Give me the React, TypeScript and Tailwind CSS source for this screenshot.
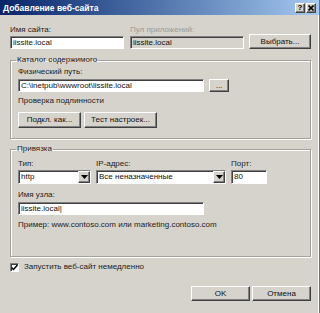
import { ReactNode } from 'react';

const sunken =
  'border border-t-[#808080] border-l-[#808080] border-b-white border-r-white shadow-[inset_1px_1px_0_#404040]';
const raised =
  'border border-t-white border-l-white border-b-[#404040] border-r-[#404040] shadow-[inset_-1px_-1px_0_#808080] bg-[#d6d3cc]';

function Label({ children, muted = false }: { children: ReactNode; muted?: boolean }) {
  return (
    <div className={`leading-[10px] whitespace-nowrap ${muted ? 'text-[#9c9a94]' : 'text-[#222]'}`}>
      {children}
    </div>
  );
}

function TextBox({ value, className = '', disabled = false }: { value: string; className?: string; disabled?: boolean }) {
  return (
    <div
      className={`${sunken} ${disabled ? 'bg-[#d6d3cc]' : 'bg-white'} h-[13px] flex items-center pl-[2px] leading-[10px] text-[#111] ${className}`}
    >
      {value}
    </div>
  );
}

function Button({ children, className = '' }: { children: ReactNode; className?: string }) {
  return (
    <div className={`${raised} flex items-center justify-center leading-[10px] text-[#111] ${className}`}>
      {children}
    </div>
  );
}

function Select({ value, className = '' }: { value: string; className?: string }) {
  return (
    <div className={`${sunken} bg-white h-[14px] flex items-stretch ${className}`}>
      <div className="flex-1 flex items-center pl-[2px] leading-[10px] text-[#111] whitespace-nowrap overflow-hidden">
        {value}
      </div>
      <div className={`${raised} w-[12px] flex items-center justify-center`}>
        <svg width="7" height="4" viewBox="0 0 7 4">
          <path d="M0 0h7L3.5 4z" fill="#000" />
        </svg>
      </div>
    </div>
  );
}

function Group({ title, children, className = '' }: { title: string; children: ReactNode; className?: string }) {
  return (
    <fieldset
      className={`border border-[#a4a19a] shadow-[inset_1px_1px_0_#fff,1px_1px_0_#fff] px-[7px] ${className}`}
    >
      <legend className="-ml-[2px] px-[1px] leading-[10px] text-[#222]">{title}</legend>
      {children}
    </fieldset>
  );
}

export default function App() {
  return (
    <div className="w-[320px] h-[313px] bg-[#d6d3cc] font-['Liberation_Sans',Arial,sans-serif] text-[8px] flex flex-col border-r border-r-[#707070] shadow-[inset_-1px_0_0_#fff] overflow-hidden">
      {/* Title bar */}
      <div className="h-[15px] bg-gradient-to-r from-[#0a246a] to-[#a6caf0] flex items-center pl-[3px] pr-[3px]">
        <span className="text-white font-bold text-[8.5px] leading-[10px] flex-1">Добавление веб-сайта</span>
        <div className={`${raised} w-[10px] h-[10px] flex items-center justify-center text-[8px] font-bold leading-none text-black`}>?</div>
        <div className={`${raised} w-[10px] h-[10px] ml-[1px] flex items-center justify-center`}>
          <svg width="6" height="6" viewBox="0 0 6 6">
            <path d="M0.5 0.5L5.5 5.5M5.5 0.5L0.5 5.5" stroke="#000" strokeWidth="1.6" />
          </svg>
        </div>
      </div>

      <div className="flex flex-col pl-[10px] pr-[8px]">
        {/* Site name row */}
        <div className="flex items-end pt-[10px]">
          <div className="w-[114px] flex flex-col gap-[1px]">
            <Label>Имя сайта:</Label>
            <TextBox value="iissite.local" />
          </div>
          <div className="w-[114px] ml-[6px] flex flex-col gap-[1px]">
            <Label muted>Пул приложений:</Label>
            <TextBox value="iissite.local" disabled />
          </div>
          <Button className="w-[62px] h-[15px] ml-[5px]">Выбрать...</Button>
        </div>

        {/* Content directory */}
        <Group title="Каталог содержимого" className="mt-[6px] pb-[10px]">
          <div className="mt-[2px]">
            <Label>Физический путь:</Label>
          </div>
          <div className="flex items-center mt-[2px]">
            <TextBox value="C:\inetpub\wwwroot\iissite.local" className="w-[186px]" />
            <Button className="w-[20px] h-[13px] ml-[5px]">...</Button>
          </div>
          <div className="mt-[4px]">
            <Label>Проверка подлинности</Label>
          </div>
          <div className="flex gap-[3px] mt-[6px]">
            <Button className="w-[63px] h-[16px]">Подкл. как...</Button>
            <Button className="w-[73px] h-[16px]">Тест настроек...</Button>
          </div>
        </Group>

        {/* Binding */}
        <Group title="Привязка" className="mt-[5px] pb-[26px]">
          <div className="flex gap-[5px] mt-[5px]">
            <div className="w-[73px] flex flex-col gap-[1px]">
              <Label>Тип:</Label>
              <Select value="http" />
            </div>
            <div className="w-[130px] flex flex-col gap-[1px]">
              <Label>IP-адрес:</Label>
              <Select value="Все неназначенные" />
            </div>
            <div className="w-[36px] flex flex-col gap-[1px]">
              <Label>Порт:</Label>
              <TextBox value="80" className="h-[14px]" />
            </div>
          </div>
          <div className="mt-[6px]">
            <Label>Имя узла:</Label>
          </div>
          <TextBox value="iissite.local|" className="w-[186px] mt-[2px]" />
          <div className="mt-[5px]">
            <Label>Пример: www.contoso.com или marketing.contoso.com</Label>
          </div>
        </Group>

        {/* Start checkbox */}
        <div className="flex items-center mt-[5px]">
          <div className={`${sunken} bg-white w-[9px] h-[9px] flex items-center justify-center`}>
            <svg width="7" height="7" viewBox="0 0 7 7">
              <path d="M0.5 3.5L2.5 5.5L6.5 1" fill="none" stroke="#000" strokeWidth="1.5" />
            </svg>
          </div>
          <span className="ml-[5px] leading-[10px] text-[#222]">Запустить веб-сайт немедленно</span>
        </div>

        {/* Dialog buttons */}
        <div className="flex justify-end gap-[2px] mt-[14px]">
          <Button className="w-[59px] h-[15px]">OK</Button>
          <Button className="w-[59px] h-[15px]">Отмена</Button>
        </div>
      </div>
    </div>
  );
}
